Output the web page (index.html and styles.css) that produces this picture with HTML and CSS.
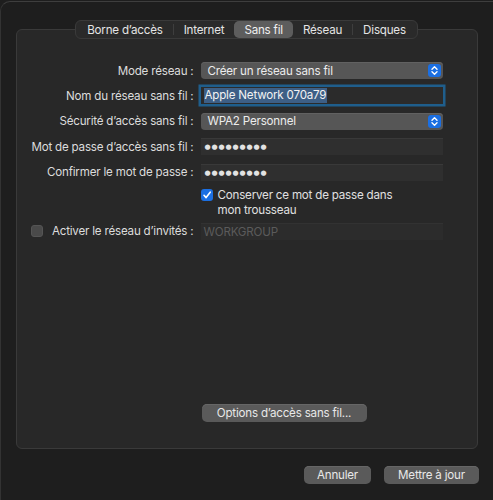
FILE: index.html
```html
<!DOCTYPE html>
<html lang="fr">
<head>
<meta charset="utf-8">
<title>Sans fil</title>
<link rel="stylesheet" href="styles.css">
</head>
<body>
<div class="window">
  <div class="tabs">
    <div class="seg">Borne d’accès</div>
    <div class="seg">Internet</div>
    <div class="seg selected">Sans fil</div>
    <div class="seg">Réseau</div>
    <div class="seg last">Disques</div>
  </div>
  <div class="panel">
    <div class="form">
      <div class="label">Mode réseau :</div>
      <div class="cell"><div class="popup"><span>Créer un réseau sans fil</span><span class="stepper"><svg width="13" height="13" viewBox="0 0 13 13"><path d="M4 5.2 L6.5 2.8 L9 5.2 M4 7.8 L6.5 10.2 L9 7.8" fill="none" stroke="#fff" stroke-width="1.4" stroke-linecap="round" stroke-linejoin="round"/></svg></span></div></div>

      <div class="label">Nom du réseau sans fil :</div>
      <div class="cell"><div class="field focus"><span class="sel">Apple Network 070a79</span></div></div>

      <div class="label">Sécurité d’accès sans fil :</div>
      <div class="cell"><div class="popup"><span>WPA2 Personnel</span><span class="stepper"><svg width="13" height="13" viewBox="0 0 13 13"><path d="M4 5.2 L6.5 2.8 L9 5.2 M4 7.8 L6.5 10.2 L9 7.8" fill="none" stroke="#fff" stroke-width="1.4" stroke-linecap="round" stroke-linejoin="round"/></svg></span></div></div>

      <div class="label">Mot de passe d’accès sans fil :</div>
      <div class="cell"><div class="field"><span class="dots">●●●●●●●●●</span></div></div>

      <div class="label">Confirmer le mot de passe :</div>
      <div class="cell"><div class="field"><span class="dots">●●●●●●●●●</span></div></div>

      <div class="label"></div>
      <div class="cell top">
        <div class="check-row">
          <span class="checkbox on"><svg width="12" height="12" viewBox="0 0 12 12"><path d="M3 6.3 L5.1 8.6 L9.2 3.2" fill="none" stroke="#fff" stroke-width="1.6" stroke-linecap="round" stroke-linejoin="round"/></svg></span>
          <span class="check-text">Conserver ce mot de passe dans<br>mon trousseau</span>
        </div>
      </div>

      <div class="label guest"><span class="checkbox off"></span><span>Activer le réseau d’invités :</span></div>
      <div class="cell"><div class="field disabled"><span>WORKGROUP</span></div></div>
    </div>
    <div class="spacer"></div>
    <div class="options-row"><button class="btn options">Options d’accès sans fil...</button></div>
  </div>
  <div class="footer">
    <button class="btn cancel">Annuler</button>
    <button class="btn update">Mettre à jour</button>
  </div>
</div>
</body>
</html>
```

FILE: styles.css
```css
html, body {
  margin: 0;
  padding: 0;
  background: #1e1e1e;
}
body {
  font-family: Inter, "Helvetica Neue", "Liberation Sans", sans-serif;
  font-size: 11.6px;
  letter-spacing: -0.2px;
  color: #dedede;
  width: 493px;
  height: 500px;
  overflow: hidden;
}
.window {
  margin-top: 1px;
  height: 499px;
  box-sizing: border-box;
  border-top: 1px solid #3e3e3e;
  border-left: 1px solid #333;
  border-top-left-radius: 10px;
  padding-top: 18px;
  display: flex;
  flex-direction: column;
  align-items: center;
}
.tabs {
  position: relative;
  z-index: 2;
  display: flex;
  height: 19px;
  box-sizing: border-box;
  background: #2a2a2a;
  border: 1px solid #3a3a3a;
  border-radius: 6px;
  align-items: center;
  padding: 0 1px;
  margin-left: -1px;
}
.seg {
  padding: 0 10px;
  color: #e4e4e4;
  border-right: 1px solid #3e3e3e;
  box-sizing: border-box;
  display: flex;
  align-items: center;
  height: 11px;
  white-space: nowrap;
}
.seg.last { border-right: none; }
.seg.selected {
  background: #5d5d5d;
  border-radius: 5px;
  height: 17px;
  border-right: none;
  margin-left: -1px;
  color: #f0f0f0;
}
.panel {
  margin-top: -10px;
  width: 462px;
  height: 420px;
  box-sizing: border-box;
  background: #282828;
  border: 1px solid #3a3a3a;
  border-radius: 6px;
  margin-left: -1px;
  padding-top: 28px;
  padding-bottom: 26px;
  display: flex;
  flex-direction: column;
}
.form {
  display: grid;
  grid-template-columns: 163px 242px;
  grid-template-rows: 25px 25px 26px 25px 26px 36px 20px;
  column-gap: 7px;
  padding-left: 14px;
}
.label {
  display: flex;
  align-items: center;
  justify-content: flex-end;
  white-space: nowrap;
  color: #dcdcdc;
}
.label.guest {
  justify-content: space-between;
}
.cell {
  display: flex;
  align-items: center;
}
.cell.top {
  align-items: flex-start;
}
.popup {
  width: 242px;
  height: 17px;
  box-sizing: border-box;
  background: #565656;
  border-radius: 4px;
  box-shadow: inset 0 1px 0 #616161;
  display: flex;
  align-items: center;
  justify-content: space-between;
  padding-left: 7px;
  padding-right: 2px;
  color: #ececec;
}
.stepper {
  width: 13px;
  height: 13px;
  background: #1b6fe2;
  border-radius: 3px;
  display: flex;
}
.field {
  width: 242px;
  height: 17px;
  box-sizing: border-box;
  background: #2f2f2f;
  border-top: 1px solid #393939;
  display: flex;
  align-items: center;
  padding-left: 3px;
  color: #ececec;
}
.field.focus {
  box-shadow: 0 0 0 2.5px #1f5e8c;
  border-top: none;
  background: #2b2b2b;
}
.sel {
  background: #3d5f86;
  color: #f2f2f2;
  padding: 0 1px;
  line-height: 15px;
}
.dots {
  font-family: "DejaVu Sans", sans-serif;
  font-size: 7px;
  letter-spacing: 0.9px;
  color: #e2e2e2;
  padding-left: 1px;
}
.field.disabled {
  background: #2c2c2c;
  border-top: 1px solid #323232;
  color: #5b5b5b;
}
.check-row {
  display: flex;
  align-items: flex-start;
  padding-top: 3px;
}
.checkbox {
  width: 12px;
  height: 12px;
  border-radius: 3px;
  box-sizing: border-box;
  display: flex;
  flex: none;
}
.checkbox.on {
  background: #1b6fe2;
  margin-top: 1px;
}
.checkbox.off {
  background: #4a4a4a;
  border: 1px solid #555;
}
.check-text {
  margin-left: 5px;
  line-height: 14.5px;
  color: #e0e0e0;
}
.spacer { flex: 1; }
.options-row {
  padding-left: 185px;
  display: flex;
}
.btn {
  font-family: inherit;
  font-size: 11.6px;
  letter-spacing: -0.2px;
  color: #e8e8e8;
  background: #5a5a5a;
  border: none;
  border-radius: 5px;
  height: 18px;
  padding: 0;
  white-space: nowrap;
  box-shadow: inset 0 1px 0 #666;
  cursor: default;
}
.btn.options { width: 165px; }
.footer {
  align-self: stretch;
  display: flex;
  justify-content: flex-end;
  gap: 13px;
  margin-top: 17px;
  padding-right: 14px;
}
.btn.cancel { width: 67px; }
.btn.update { width: 95px; }
```
